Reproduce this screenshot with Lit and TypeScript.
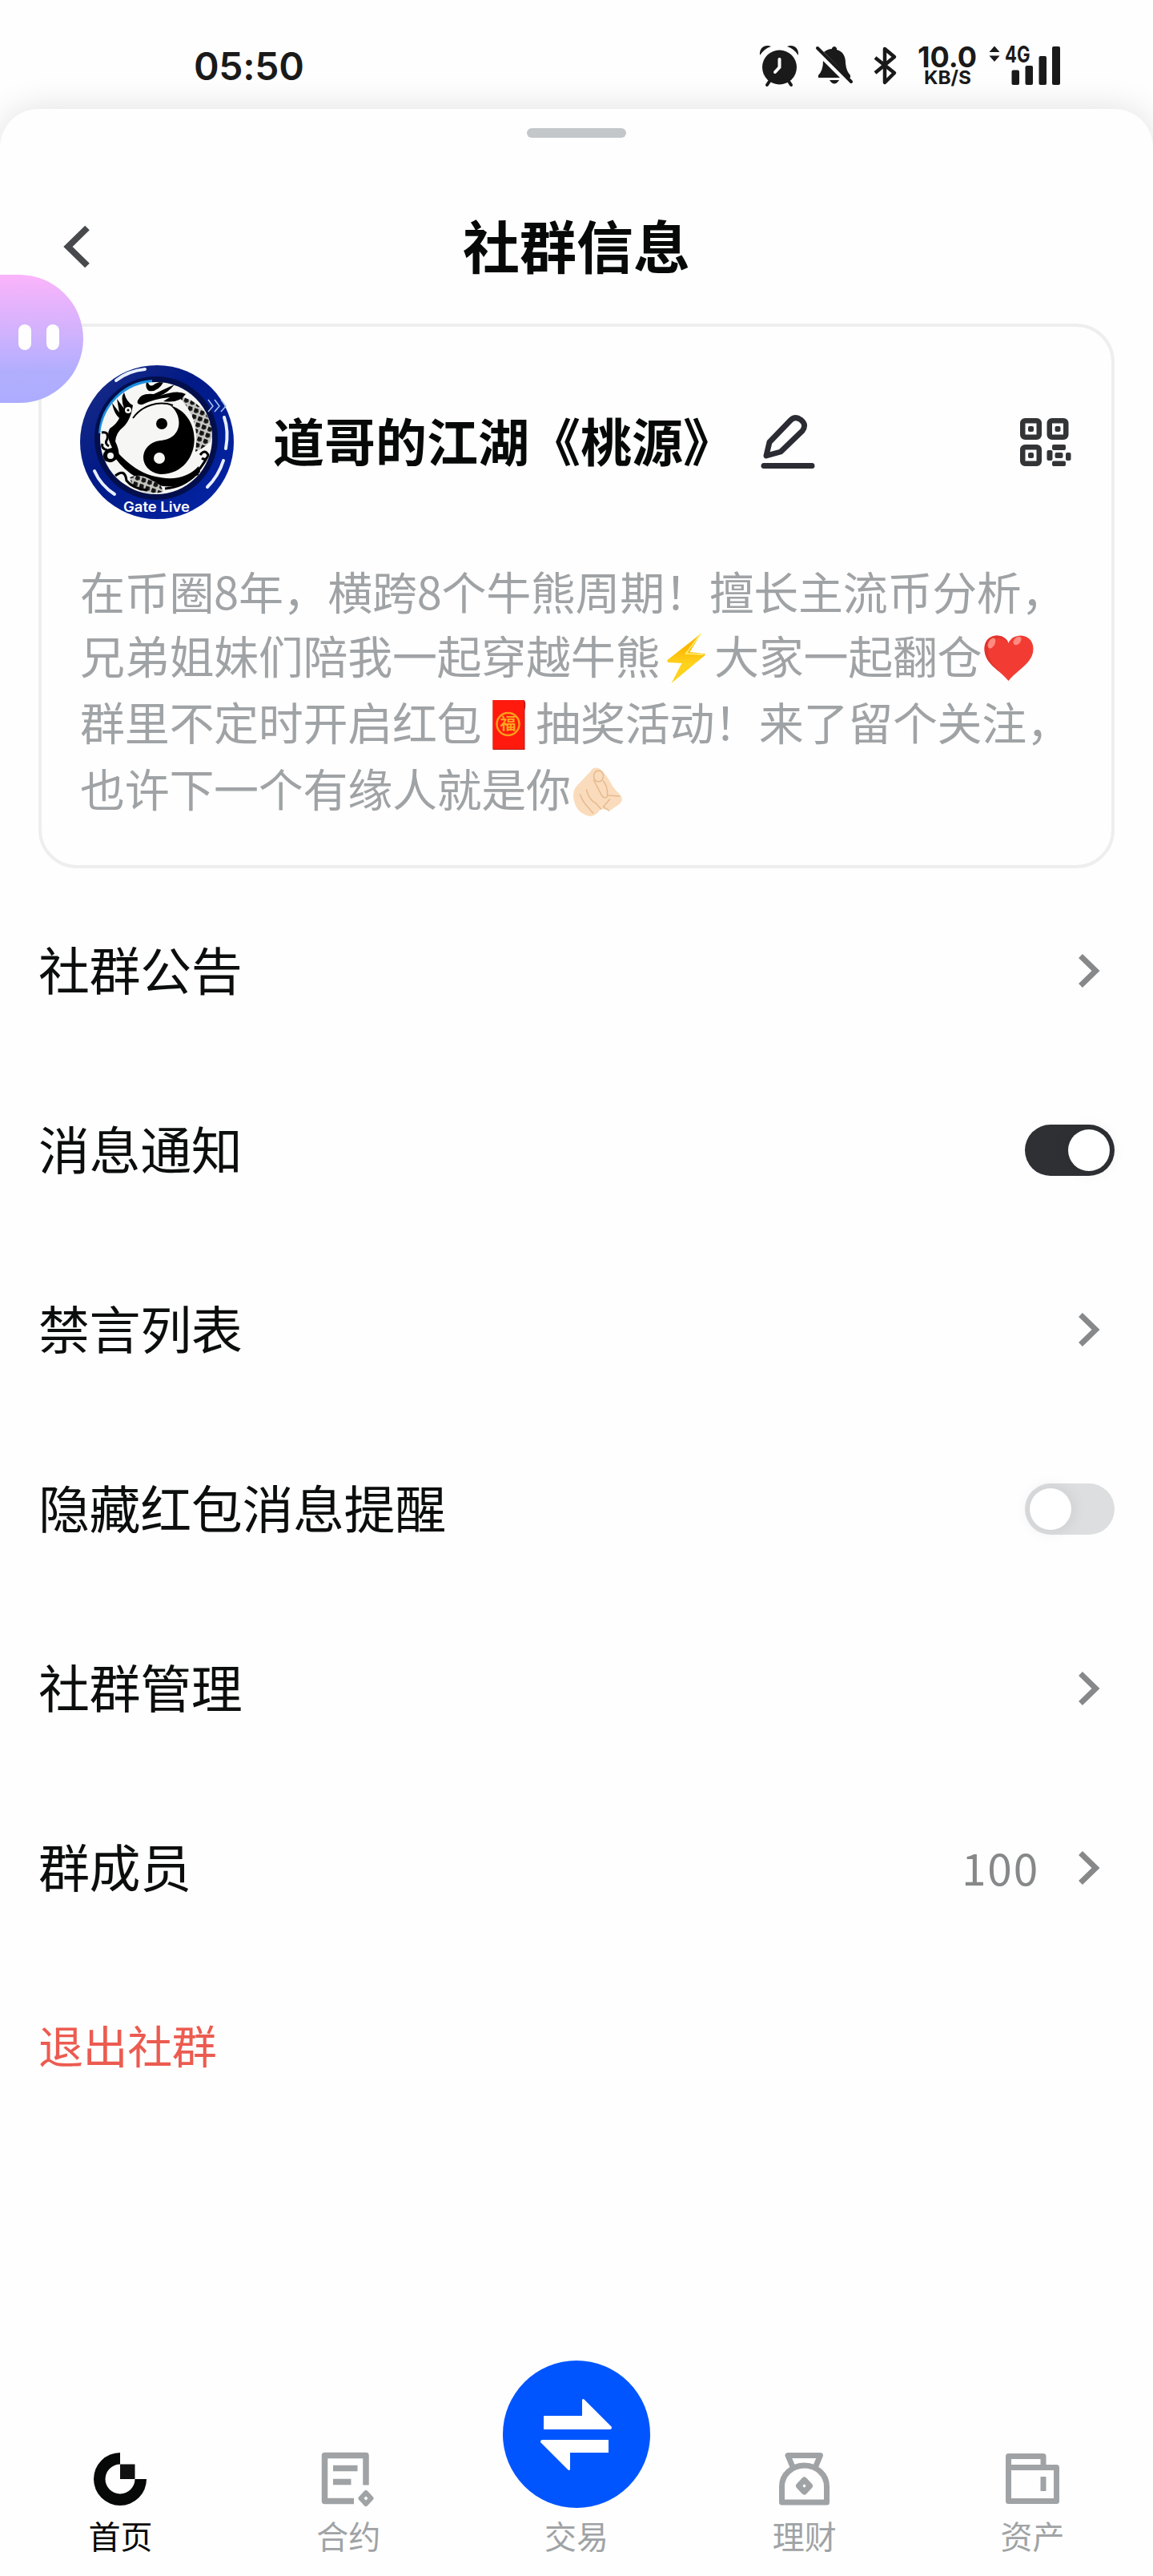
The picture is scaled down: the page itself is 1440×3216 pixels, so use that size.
import { LitElement, html, css } from "lit";
import { customElement, property } from "lit/decorators.js";

type Row = { label: string; kind: "link" | "switch"; on?: boolean; value?: string };

const rows: Row[] = [
  { label: "社群公告", kind: "link" },
  { label: "消息通知", kind: "switch", on: true },
  { label: "禁言列表", kind: "link" },
  { label: "隐藏红包消息提醒", kind: "switch", on: false },
  { label: "社群管理", kind: "link" },
  { label: "群成员", kind: "link", value: "100" },
];

@customElement("status-bar")
class StatusBar extends LitElement {
  static styles = css`
    :host {
      display: flex;
      justify-content: space-between;
      align-items: center;
      box-sizing: border-box;
      height: 136px;
      padding: 28px 116px 0 242px;
      color: #1a1a1a;
      font-family: Inter, "Liberation Sans", sans-serif;
    }
    .time {
      padding-top: 2px;
      font-size: 48px;
      font-weight: 600;
      line-height: 50px;
      letter-spacing: -0.3px;
    }
    .icons {
      display: block;
      width: 376px;
      height: 84px;
    }
  `;

  render() {
    return html`
      <div class="time">05:50</div>
      <svg class="icons" viewBox="948 40 376 84" fill="#1a1a1a">
        <path d="M949 69C948 59 956 55 963 58Q954 61 949 69ZM997 69C998 59 990 55 983 58Q992 61 997 69Z" />
        <circle cx="973.5" cy="84" r="21.5" />
        <path d="M962 100L958 106M984 100L988 106" stroke="#1a1a1a" stroke-width="4" stroke-linecap="round" />
        <path d="M973.500 74V84L968 90" stroke="#fff" stroke-width="4" fill="none" stroke-linecap="round" />

        <path d="M1029 65Q1034 61 1039 61V60Q1042 56 1045 60V62Q1056 65 1056 79Q1057 89 1062 94V97H1060ZM1028 76L1049 97H1022V94Q1028 88 1028 76Z" />
        <path d="M1036 100H1048Q1042 109 1036 100Z" />
        <path d="M1021 60L1063 102" stroke="#1a1a1a" stroke-width="4" stroke-linecap="round" />

        <path d="M1093 72L1117 91L1105 103V61L1117 71L1093 91" fill="none" stroke="#1a1a1a" stroke-width="4.500" stroke-linejoin="round" />

        <text x="1146" y="83.500" font-size="36" font-weight="700" textLength="74" lengthAdjust="spacingAndGlyphs">10.0</text>
        <text x="1154" y="104.500" font-size="23.500" font-weight="700" textLength="59" lengthAdjust="spacingAndGlyphs">KB/S</text>

        <path d="M1235.500 65L1242 57.500L1248.500 65ZM1235.500 69.500H1248.500L1242 77Z" />
        <text x="1255" y="78" font-size="29" font-weight="700" textLength="31.500" lengthAdjust="spacingAndGlyphs">4G</text>
        <rect x="1263.500" y="87.500" width="9.500" height="18.500" rx="2" />
        <rect x="1280.500" y="82" width="9.500" height="24" rx="2" />
        <rect x="1297.500" y="70" width="9.500" height="36" rx="2" />
        <rect x="1314" y="58" width="10" height="48" rx="2" />
      </svg>
    `;
  }
}

@customElement("community-avatar")
class CommunityAvatar extends LitElement {
  static styles = css`
    :host {
      display: block;
      width: 192px;
      height: 192px;
    }
    svg {
      display: block;
    }
  `;

  render() {
    return html`
      <svg width="192" height="192" viewBox="0 0 192 192">
        <defs>
          <linearGradient id="ring" x1="0" y1="0" x2="1" y2="1">
            <stop offset="0" stop-color="#1c2f86" />
            <stop offset="0.400" stop-color="#021a86" />
            <stop offset="1" stop-color="#0325a8" />
          </linearGradient>
          <clipPath id="inner"><circle cx="95" cy="91" r="70" /></clipPath>
          <pattern id="scales" width="8" height="8" patternUnits="userSpaceOnUse" patternTransform="rotate(20)">
            <rect width="8" height="8" fill="#c8c8c4" />
            <path d="M1 1H6L7 5L4 7L1 6Z" fill="#151515" />
          </pattern>
        </defs>
        <circle cx="96" cy="96" r="96" fill="url(#ring)" />
        <circle cx="95" cy="91" r="77" fill="#020f4c" />
        <path d="M25 85A70 70 0 0 1 90 20" fill="none" stroke="#1b8fe0" stroke-width="4" />
        <circle cx="95" cy="91" r="70" fill="#f6f6f4" />
        <g clip-path="url(#inner)">
          <path d="M118 36Q148 44 158 62Q170 80 162 96Q154 104 144 108Q148 78 138 60Q130 44 118 36Z" fill="url(#scales)" />
          <path d="M84 18Q86 30 94 23L106 18Q98 34 86 32Q80 28 84 18ZM72 44Q76 34 92 36L118 24Q110 34 100 38Q122 30 132 36Q124 48 104 45L112 40Q92 42 78 49Q70 50 72 44Z" />
          <path d="M55 34Q58 46 66 50L64 60Q60 72 53 78Q45 84 44 95Q50 108 48 114Q40 126 29 118Q26 106 40 103Q32 88 37 79Q46 73 49 66Q42 60 40 47L49 59L46 42L55 54Q50 40 55 34Z" />
          <circle cx="60" cy="56" r="4" fill="#f6f6f4" />
          <circle cx="60" cy="56" r="1.500" />
          <circle cx="38" cy="113" r="4" fill="#f6f6f4" />
          <path d="M27 84Q36 82 34 92Q30 98 36 101M28 98Q26 104 34 106M64 72L62 80" fill="none" stroke="#000" stroke-width="3" />
          <path d="M46 108Q68 132 90 138Q128 148 148 126L150 133Q132 154 104 151Q66 146 44 116Z" />
          <path d="M62 140Q76 134 90 144Q102 148 104 158Q88 162 74 156Q64 152 62 140Z" fill="url(#scales)" />
          <path d="M44 138Q56 128 58 144Q66 154 84 156M52 148Q64 156 78 164M106 154Q130 152 144 136Q154 124 158 116M150 112Q156 104 160 112Q158 120 152 116M128 142Q136 136 148 136" fill="none" stroke="#000" stroke-width="3" />
        </g>
        <path d="M66 66A44 44 0 0 1 116 50Q144 62 143 92A43 43 0 0 1 84 132Q48 118 48 96Q52 78 66 66Z" fill="#f6f6f4" />
        <path d="M66 66A44 44 0 0 1 116 50" fill="none" stroke="#000" stroke-width="2" />
        <path d="M112 50C158 63 151 137 100 136C72 132 72 98 100 94C130 92 128 60 112 50Z" />
        <circle cx="102" cy="73" r="7" />
        <circle cx="99" cy="116" r="7" fill="#f6f6f4" />
        <g fill="none" stroke="#e8efff" stroke-width="4" stroke-linecap="round">
          <path d="M45 19Q60 7 81 5" />
          <path d="M180 65Q186 82 182 104" />
          <path d="M179 119Q173 138 159 152" />
          <path d="M18 132Q26 150 43 161" />
        </g>
        <path d="M160 43L166 51L160 58M168 43L174 51L168 58M176 43L182 51L176 58" fill="none" stroke="#a9c7f2" stroke-width="1.500" />
        <text x="54" y="183" fill="#fff" font-family="Inter, sans-serif" font-size="17" font-weight="600" textLength="83" lengthAdjust="spacingAndGlyphs">Gate Live</text>
      </svg>
    `;
  }
}

@customElement("community-card")
class CommunityCard extends LitElement {
  static styles = css`
    :host {
      display: block;
      box-sizing: border-box;
      height: 680px;
      padding: 48px 48px 0;
      border: 4px solid #eeeeef;
      border-radius: 48px;
    }
    .head {
      display: flex;
      align-items: center;
    }
    .name {
      margin: 0 0 0 49px;
      padding-bottom: 8px;
      font-size: 64px;
      font-weight: 700;
      line-height: 80px;
      color: #070808;
      white-space: nowrap;
    }
    .edit {
      margin-left: 33px;
    }
    .qr {
      margin-left: auto;
      margin-right: 2px;
    }
    .about {
      margin-top: 48px;
      font-size: 56px;
      letter-spacing: -0.3px;
      color: #a0a3a5;
      white-space: nowrap;
    }
    .line {
      display: flex;
      align-items: center;
      height: 80px;
    }
    .line.tall {
      height: 86px;
    }
    .emoji {
      display: block;
      width: 68px;
      height: 66px;
      padding-top: 12px;
      flex: none;
    }
  `;

  render() {
    return html`
      <div class="head">
        <community-avatar></community-avatar>
        <h2 class="name">道哥的江湖《桃源》</h2>
        <svg class="edit" width="68" height="68" viewBox="0 0 68 68" fill="none" stroke="#2b2b33" stroke-width="7" stroke-linejoin="round" stroke-linecap="round">
          <path d="M11 34L37 7Q43 1 50 6Q58 12 52 20L25 46L7 51Z" />
          <path d="M4 63.500H64" />
        </svg>
        <svg class="qr" width="64" height="60" viewBox="0 0 64 60" fill="#333436">
          <g fill="none" stroke="#333436" stroke-width="6.500">
            <rect x="3.250" y="3.250" width="20.500" height="20.500" rx="3" />
            <rect x="36.750" y="3.250" width="20.500" height="20.500" rx="3" />
            <rect x="3.250" y="36.250" width="20.500" height="20.500" rx="3" />
          </g>
          <rect x="10" y="10" width="7" height="7" rx="2" />
          <rect x="43.500" y="10" width="7" height="7" rx="2" />
          <rect x="10" y="43" width="7" height="7" rx="2" />
          <rect x="40" y="33" width="17" height="7" rx="2" />
          <rect x="33.500" y="40" width="7" height="13" rx="2" />
          <rect x="43.500" y="43" width="10" height="7" rx="2" />
          <rect x="57" y="43" width="6.500" height="10" rx="2" />
          <rect x="40" y="53.500" width="17" height="6.500" rx="2" />
        </svg>
      </div>
      <div class="about">
        <div class="line">在币圈8年，横跨8个牛熊周期！擅长主流币分析，</div>
        <div class="line">兄弟姐妹们陪我一起穿越牛熊${this.bolt()}大家一起翻仓${this.heart()}</div>
        <div class="line tall">群里不定时开启红包${this.envelope()}抽奖活动！来了留个关注，</div>
        <div class="line">也许下一个有缘人就是你${this.hand()}</div>
      </div>
    `;
  }

  bolt() {
    return html`<svg class="emoji" viewBox="0 0 67 66">
      <defs>
        <linearGradient id="bolt" x1="0" y1="0" x2="0" y2="1">
          <stop offset="0.300" stop-color="#feb804" />
          <stop offset="0.600" stop-color="#ffd21c" />
        </linearGradient>
      </defs>
      <path d="M51 2L9 35Q8 37 10 38L27 39L14 64L56 29Q57 27 54 27L37 25Z" fill="url(#bolt)" />
      <path d="M51 2L32 27L54 28" fill="none" stroke="#fff176" stroke-width="1.500" />
    </svg>`;
  }

  heart() {
    return html`<svg class="emoji" viewBox="0 0 67 66">
      <path d="M33 14C28 0 3 1 3 21C3 40 22 47 33 61C44 47 64 39 64 21C64 1 38 0 33 14Z" fill="#f23c33" />
      <path d="M33 14C28 0 3 1 3 21C3 40 22 47 33 61C15 42 6 36 8 20C11 5 25 5 33 14Z" fill="#e0352e" />
      <ellipse cx="12" cy="14" rx="4" ry="7" transform="rotate(28 12 14)" fill="#ff8a80" />
      <ellipse cx="44" cy="11" rx="4" ry="6" transform="rotate(42 44 11)" fill="#ff8a80" />
    </svg>`;
  }

  envelope() {
    return html`<svg class="emoji" viewBox="0 0 67 66">
      <path d="M14 2H53Q56 4 54 15V64H14Z" fill="#b01818" />
      <rect x="14" y="2" width="39" height="61" fill="#ff1a0d" />
      <circle cx="33" cy="32" r="14" fill="none" stroke="#ff9c1a" stroke-width="2.500" />
      <text x="23" y="39" font-size="20" font-weight="700" fill="#ffa31f">福</text>
    </svg>`;
  }

  hand() {
    return html`<svg class="emoji" viewBox="0 0 67 66">
      <path d="M7 26L24 8Q28 1 36 5Q42 10 48 20Q52 29 60 36Q67 43 60 49L48 57Q40 54 36 56Q28 68 17 62Q6 58 3 43Q1 33 7 26Z" fill="#fadcbc" />
      <g fill="none" stroke="#e5b98f" stroke-width="1.500" stroke-linecap="round">
        <ellipse cx="34" cy="14" rx="6" ry="7" />
        <path d="M28 19L38 38Q42 44 46 38M19 31Q22 44 31 48L37 55M11 37Q14 46 22 54L27 60M40 20Q46 28 45 38L60 39M48 43L40 52L47 57" />
      </g>
    </svg>`;
  }
}

@customElement("setting-row")
class SettingRow extends LitElement {
  @property({ attribute: false }) row!: Row;

  static styles = css`
    :host {
      display: flex;
      align-items: center;
      justify-content: space-between;
      height: 224px;
      font-size: 64px;
      letter-spacing: -0.4px;
      color: #0c0d0d;
    }
    .label {
      padding-bottom: 8px;
    }
    .end {
      display: flex;
      align-items: center;
      gap: 46px;
      padding-right: 16px;
    }
    .value {
      padding-bottom: 5px;
      font-size: 55px;
      letter-spacing: 1.8px;
      color: #868889;
    }
    .switch {
      display: flex;
      box-sizing: border-box;
      width: 112px;
      height: 64px;
      padding: 6px;
      border-radius: 32px;
      background: #dcdee0;
    }
    .switch.on {
      justify-content: flex-end;
      background: #2e3034;
    }
    .knob {
      width: 52px;
      height: 52px;
      border-radius: 50%;
      background: #fff;
      box-shadow: 0 0 20px rgba(0, 0, 0, 0.1);
    }
  `;

  render() {
    const { label, kind, on, value } = this.row;
    if (kind === "switch") {
      return html`<span class="label">${label}</span><span class="switch ${on ? "on" : ""}"><span class="knob"></span></span>`;
    }
    return html`
      <span class="label">${label}</span>
      <span class="end">
        ${value ? html`<span class="value">${value}</span>` : ""}
        <svg width="32" height="44" viewBox="0 0 32 44" fill="none" stroke="#868889" stroke-width="7">
          <path d="M5.500 3.500L24.500 22L5.500 40.500" />
        </svg>
      </span>
    `;
  }
}

@customElement("tab-bar")
class TabBar extends LitElement {
  static styles = css`
    :host {
      display: grid;
      grid-template-columns: repeat(5, 1fr);
      align-items: end;
      padding: 0 8px 22px;
      font-size: 40px;
      line-height: 58px;
      color: #a0a3a5;
    }
    .tab {
      display: flex;
      flex-direction: column;
      align-items: center;
      gap: 5px;
    }
    .tab.active {
      color: #070808;
    }
    svg {
      display: block;
    }
  `;

  render() {
    return html`
      <div class="tab active">
        <svg width="72" height="72" viewBox="0 0 72 72">
          <path d="M36 3A33 33 0 1 0 69 36H54.500A18.500 18.500 0 1 1 36 17.500Z" fill="#070808" />
          <rect x="36" y="17.500" width="18.500" height="18.500" fill="#111" />
        </svg>
        首页
      </div>
      <div class="tab">
        <svg width="72" height="72" viewBox="0 0 72 72" fill="none" stroke="#a0a3a5" stroke-width="7.500">
          <path d="M43 63.500H6.500V6.500H58V43.500" stroke-linejoin="round" />
          <path d="M17 22.500H47.500M17 39.500H39.500" />
          <path d="M58 53L64.500 60L58 67L51.500 60Z" stroke-width="6" stroke-linejoin="round" />
        </svg>
        合约
      </div>
      <div class="tab">
        <svg width="184" height="184" viewBox="0 0 184 184">
          <circle cx="92" cy="92" r="92" fill="#0055ff" />
          <path d="M51 69H99V49Q100 47 102 49L136 83Q136 86 134 86H51ZM132 99V115H84V136Q83 138 81 136L47 102Q47 99 49 99Z" fill="#fff" />
        </svg>
        交易
      </div>
      <div class="tab">
        <svg width="72" height="72" viewBox="0 0 72 72" fill="none" stroke="#a0a3a5" stroke-width="7" stroke-linejoin="round">
          <path d="M21.500 22L15 6.500H55.500L49 22" />
          <path d="M7.500 65V45A27.500 25.500 0 0 1 63.500 45V65Z" />
          <path d="M35.500 37L42.500 44.500L35.500 52L28.500 44.500Z" />
        </svg>
        理财
      </div>
      <div class="tab">
        <svg width="72" height="72" viewBox="0 0 72 72" fill="none" stroke="#a0a3a5" stroke-width="7" stroke-linejoin="round">
          <path d="M5.500 21.500V7.500H49V21.500M5.500 21.500H65.500V63.500H5.500Z" />
          <path d="M49 33V51" />
        </svg>
        资产
      </div>
    `;
  }
}

@customElement("app-root")
class AppRoot extends LitElement {
  static styles = css`
    :host {
      display: flex;
      flex-direction: column;
      height: 3216px;
      overflow: hidden;
      background: #fefefe;
      font-family: "Noto Sans CJK SC", sans-serif;
    }
    .sheet {
      position: relative;
      display: flex;
      flex-direction: column;
      flex: 1;
      border-radius: 48px 48px 0 0;
      background: #fefefe;
      box-shadow: 0 0 44px rgba(0, 0, 0, 0.12);
    }
    .handle {
      align-self: center;
      width: 124px;
      height: 12px;
      margin-top: 24px;
      border-radius: 6px;
      background: #c4c7ca;
    }
    .nav {
      display: grid;
      grid-template-columns: 1fr auto 1fr;
      align-items: center;
      height: 120px;
      margin-top: 76px;
      padding: 0 72px;
    }
    .nav h1 {
      margin: 0;
      padding-bottom: 8px;
      font-size: 71px;
      font-weight: 700;
      line-height: 104px;
      color: #070808;
    }
    .content {
      padding: 36px 48px 0;
    }
    .rows {
      padding-top: 16px;
    }
    .leave {
      height: 224px;
      line-height: 216px;
      font-size: 56px;
      letter-spacing: -0.4px;
      color: #ec5b50;
    }
    .assistant {
      position: absolute;
      top: 207px;
      left: 0;
      display: flex;
      align-items: center;
      gap: 19px;
      box-sizing: border-box;
      width: 104px;
      height: 160px;
      padding: 0 0 4px 23px;
      border-radius: 0 80px 80px 0;
      background: linear-gradient(#fbb2fb, #d0b0fd 45%, #b0acff 75%, #aaaaff);
      opacity: 0.97;
    }
    .eye {
      width: 16px;
      height: 32px;
      border-radius: 8px;
      background: #fff;
    }
    tab-bar {
      margin-top: auto;
    }
  `;

  render() {
    return html`
      <status-bar></status-bar>
      <main class="sheet">
        <div class="handle"></div>
        <header class="nav">
          <svg width="48" height="56" viewBox="0 0 48 56" fill="none" stroke="#48494d" stroke-width="8">
            <path d="M37 4.500L13 28L37 51.500" />
          </svg>
          <h1>社群信息</h1>
        </header>
        <section class="content">
          <community-card></community-card>
          <div class="rows">
            ${rows.map((row) => html`<setting-row .row=${row}></setting-row>`)}
            <div class="leave">退出社群</div>
          </div>
        </section>
        <tab-bar></tab-bar>
        <div class="assistant"><span class="eye"></span><span class="eye"></span></div>
      </main>
    `;
  }
}
